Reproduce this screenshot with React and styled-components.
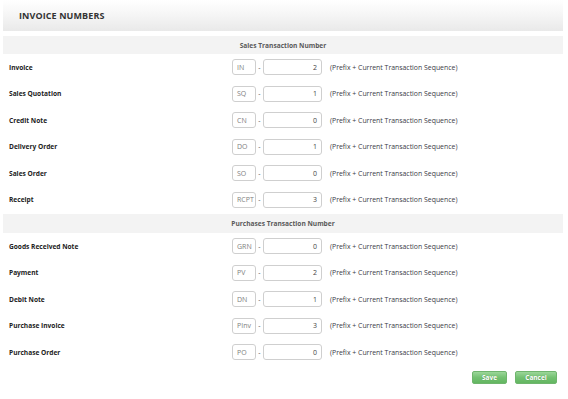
import styled, { createGlobalStyle } from 'styled-components'

const GlobalStyle = createGlobalStyle`
    html, body {
        margin: 0;
        padding: 0;
        background: #fff;
    }
    body {
        font-family: "Open Sans", "Liberation Sans", sans-serif;
        color: #333;
    }
`

const Page = styled.div`
    width: 560px;
    margin: 0 auto 0 3px;
`

const Header = styled.div`
    height: 31px;
    display: flex;
    align-items: center;
    padding-left: 16px;
    background: linear-gradient(to bottom, #ffffff 0%, #f6f6f6 45%, #e9e9e9 100%);
`

const Title = styled.h1`
    margin: 0;
    font-size: 9px;
    font-weight: 700;
    color: #333;
    letter-spacing: 0.1px;
    margin-top: -1px;
`

const SectionBar = styled.div`
    height: ${p => p.$h || 18}px;
    margin-top: ${p => p.$top || 0}px;
    background: #f3f3f3;
    display: flex;
    align-items: center;
    justify-content: center;
    font-size: 6.6px;
    font-weight: 700;
    color: #5a5a5a;
`

const Row = styled.div`
    height: 26.5px;
    display: flex;
    align-items: center;
`

const Label = styled.div`
    box-sizing: border-box;
    width: 229px;
    padding-left: 6px;
    font-size: 6.6px;
    font-weight: 700;
    color: #222;
`

const Box = styled.div`
    box-sizing: border-box;
    height: 16px;
    border: 1px solid #cfcfcf;
    border-radius: 3px;
    background: #fff;
    display: flex;
    align-items: center;
    font-size: 7px;
    padding: 0 4px;
`

const Prefix = styled(Box)`
    width: 24px;
    color: #808080;
`

const Seq = styled(Box)`
    width: 59px;
    justify-content: flex-end;
    color: #444;
`

const Dash = styled.span`
    width: 7px;
    text-align: center;
    font-size: 7px;
    color: #555;
`

const Hint = styled.span`
    margin-left: 8px;
    font-size: 6.9px;
    color: #3a3a46;
`

const Actions = styled.div`
    display: flex;
    justify-content: flex-end;
    gap: 8px;
    padding-top: 5px;
    padding-right: 6px;
`

const Button = styled.button`
    box-sizing: border-box;
    width: ${p => p.$w}px;
    height: 13px;
    padding: 0;
    border: 1px solid #6fb56d;
    border-radius: 2px;
    background: linear-gradient(to bottom, #9bd699 0%, #74c172 50%, #63b661 100%);
    color: #fff;
    font-family: "Open Sans", "Liberation Sans", sans-serif;
    font-size: 6.5px;
    font-weight: 700;
    text-shadow: 0 0 1px rgba(0, 0, 0, 0.25);
`

const sales = [
    ['Invoice', 'IN', 2],
    ['Sales Quotation', 'SQ', 1],
    ['Credit Note', 'CN', 0],
    ['Delivery Order', 'DO', 1],
    ['Sales Order', 'SO', 0],
    ['Receipt', 'RCPT', 3],
]

const purchases = [
    ['Goods Received Note', 'GRN', 0],
    ['Payment', 'PV', 2],
    ['Debit Note', 'DN', 1],
    ['Purchase Invoice', 'PInv', 3],
    ['Purchase Order', 'PO', 0],
]

const NumberRow = ({ item }) => (
    <Row>
        <Label>{item[0]}</Label>
        <Prefix>{item[1]}</Prefix>
        <Dash>-</Dash>
        <Seq>{item[2]}</Seq>
        <Hint>(Prefix + Current Transaction Sequence)</Hint>
    </Row>
)

const App = () => {
    return (
        <Page>
            <GlobalStyle />
            <Header>
                <Title>INVOICE NUMBERS</Title>
            </Header>
            <SectionBar $top={5}>Sales Transaction Number</SectionBar>
            {sales.map(item => <NumberRow key={item[1]} item={item} />)}
            <SectionBar $top={1} $h={19}>Purchases Transaction Number</SectionBar>
            {purchases.map(item => <NumberRow key={item[1]} item={item} />)}
            <Actions>
                <Button $w={35}>Save</Button>
                <Button $w={42}>Cancel</Button>
            </Actions>
        </Page>
    );
}

export default App;
